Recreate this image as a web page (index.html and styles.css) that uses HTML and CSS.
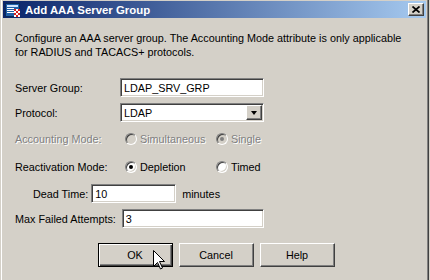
FILE: index.html
```html
<!DOCTYPE html>
<html lang="en">
<head>
    <meta charset="UTF-8">
    <title>Add AAA Server Group</title>
    <link rel="stylesheet" href="styles.css">
</head>
<body>
    <div class="window">
        <div class="titlebar">
            <svg class="app-icon" width="16" height="16" viewBox="0 0 16 16">
                <rect x="0.5" y="1.5" width="14" height="13" fill="#1f5fa8" stroke="#0a2a5a"/>
                <rect x="2" y="3" width="11" height="2" fill="#cfe4ff"/>
                <rect x="2" y="6" width="7" height="1" fill="#ffffff"/>
                <rect x="2" y="8" width="7" height="1" fill="#ffffff"/>
                <rect x="2" y="10" width="7" height="1" fill="#ffffff"/>
                <rect x="9" y="7" width="6" height="8" fill="#ffffff"/>
                <rect x="9" y="7" width="2" height="2" fill="#d42020"/>
                <rect x="13" y="7" width="2" height="2" fill="#d42020"/>
                <rect x="11" y="9" width="2" height="2" fill="#d42020"/>
                <rect x="9" y="11" width="2" height="2" fill="#d42020"/>
                <rect x="13" y="11" width="2" height="2" fill="#d42020"/>
                <rect x="11" y="13" width="2" height="2" fill="#d42020"/>
            </svg>
            <span class="title">Add AAA Server Group</span>
            <span class="close-btn">
                <svg width="8" height="7" viewBox="0 0 8 7">
                    <path d="M0.5 0.5 L7.5 6.5 M7.5 0.5 L0.5 6.5" stroke="#000" stroke-width="1.7"/>
                </svg>
            </span>
        </div>

        <div class="content">
            <p class="intro">Configure an AAA server group. The Accounting Mode attribute is only applicable for RADIUS and TACACS+ protocols.</p>

            <div class="form">
                <div class="row">
                    <label class="field-label">Server Group:</label>
                    <div class="textbox wide">LDAP_SRV_GRP</div>
                </div>
                <div class="row">
                    <label class="field-label">Protocol:</label>
                    <div class="textbox wide select">
                        <span>LDAP</span>
                        <span class="drop-btn"><span class="arrow"></span></span>
                    </div>
                </div>
                <div class="row radio-row disabled">
                    <label class="field-label">Accounting Mode:</label>
                    <div class="radio-group">
                        <span class="option"><span class="radio"></span>Simultaneous</span>
                        <span class="option"><span class="radio checked"></span>Single</span>
                    </div>
                </div>
                <div class="row radio-row">
                    <label class="field-label">Reactivation Mode:</label>
                    <div class="radio-group">
                        <span class="option"><span class="radio checked"></span>Depletion</span>
                        <span class="option"><span class="radio"></span>Timed</span>
                    </div>
                </div>
                <div class="row indent-row">
                    <label>Dead Time:</label>
                    <div class="textbox short">10</div>
                    <span class="unit">minutes</span>
                </div>
                <div class="row">
                    <label>Max Failed Attempts:</label>
                    <div class="textbox attempts">3</div>
                </div>
            </div>

            <div class="actions">
                <div class="btn default">OK</div>
                <div class="btn">Cancel</div>
                <div class="btn">Help</div>
            </div>
        </div>

        <svg class="cursor" width="13" height="20" viewBox="0 0 13 20">
            <path d="M0.5 0.5 L0.5 16.5 L4.5 12.5 L7.5 19 L9.5 18 L6.5 11.5 L11.5 11.5 Z" fill="#fff" stroke="#000" stroke-width="1"/>
        </svg>
    </div>
</body>
</html>
```

FILE: styles.css
```css
body {
    margin: 0;
    background-color: #d4d0c8;
    font-family: 'Liberation Sans', Arial, sans-serif;
    font-size: 10.8px;
    color: #000;
}

.window {
    position: relative;
    width: 429px;
    height: 280px;
    box-sizing: border-box;
    padding: 0 2px 0 2px;
    border-left: 1px solid #d4d0c8;
    border-right: 1px solid #404040;
    background-color: #d4d0c8;
    box-shadow: inset 1px 0 #fff, inset -1px 0 #808080;
    overflow: hidden;
}

.titlebar {
    display: flex;
    align-items: center;
    height: 17px;
    margin-top: 1px;
    background: linear-gradient(to right, #0a246a, #a6caf0);
}

.app-icon {
    margin-left: 2px;
    margin-right: 4px;
}

.title {
    color: #fff;
    font-weight: bold;
    font-size: 11.4px;
}

.close-btn {
    display: flex;
    align-items: center;
    justify-content: center;
    width: 16px;
    height: 13px;
    box-sizing: border-box;
    margin-left: auto;
    margin-right: 2px;
    background-color: #d4d0c8;
    border: 1px solid;
    border-color: #fff #404040 #404040 #fff;
    box-shadow: inset -1px -1px #808080;
}

.content {
    padding: 0 12px;
}

.intro {
    width: 395px;
    margin: 13px 0 0 0;
    line-height: 14px;
}

.form {
    margin-top: 19px;
}

.row {
    display: flex;
    align-items: center;
    height: 19px;
    margin-top: 6px;
}

.form .row:first-child {
    margin-top: 0;
}

.field-label {
    width: 105px;
}

.textbox {
    display: flex;
    align-items: center;
    height: 19px;
    box-sizing: border-box;
    padding: 0 3px;
    background-color: #fff;
    border: 1px solid;
    border-color: #808080 #fff #fff #808080;
    box-shadow: inset 1px 1px #404040, inset -1px -1px #d4d0c8;
}

.textbox.wide {
    width: 144px;
}

.textbox.short {
    width: 85px;
    margin-left: 3px;
}

.textbox.attempts {
    width: 142px;
    margin-left: 6px;
}

.select {
    justify-content: space-between;
    padding-right: 1px;
}

.drop-btn {
    display: flex;
    align-items: center;
    justify-content: center;
    width: 16px;
    height: 15px;
    box-sizing: border-box;
    background-color: #d4d0c8;
    border: 1px solid;
    border-color: #fff #404040 #404040 #fff;
    box-shadow: inset -1px -1px #808080;
}

.arrow {
    width: 0;
    height: 0;
    border-left: 3.5px solid transparent;
    border-right: 3.5px solid transparent;
    border-top: 4px solid #000;
}

.radio-row {
    height: 20px;
    margin-top: 7px;
}

.radio-row + .radio-row {
    margin-top: 8px;
}

.indent-row {
    margin-top: 7px;
    padding-left: 18px;
}

.radio-group {
    display: flex;
    margin-left: 5px;
}

.option {
    display: flex;
    align-items: center;
    width: 91px;
}

.radio {
    position: relative;
    width: 12px;
    height: 12px;
    box-sizing: border-box;
    margin-right: 3px;
    border-radius: 50%;
    border: 1px solid;
    border-color: #808080 #fff #fff #808080;
    background-color: #fff;
    box-shadow: inset 1px 1px #404040, inset -1px -1px #d4d0c8;
}

.radio.checked::after {
    content: "";
    position: absolute;
    top: 3px;
    left: 3px;
    width: 4px;
    height: 4px;
    border-radius: 50%;
    background-color: #000;
}

.disabled {
    color: #808080;
    text-shadow: 1px 1px #fff;
}

.disabled .radio {
    background-color: #d4d0c8;
}

.disabled .radio.checked::after {
    background-color: #808080;
}

.unit {
    margin-left: 6px;
}

.actions {
    display: flex;
    justify-content: center;
    gap: 6px;
    margin-top: 15px;
    padding-left: 3px;
}

.btn {
    display: flex;
    align-items: center;
    justify-content: center;
    width: 75px;
    height: 24px;
    box-sizing: border-box;
    border: 1px solid;
    border-color: #fff #404040 #404040 #fff;
    box-shadow: inset -1px -1px #808080;
}

.btn.default {
    border-color: #000;
    box-shadow: inset 1px 1px #fff, inset -1px -1px #404040, inset -2px -2px #808080;
}

.cursor {
    position: absolute;
    left: 152px;
    top: 250px;
}
```
